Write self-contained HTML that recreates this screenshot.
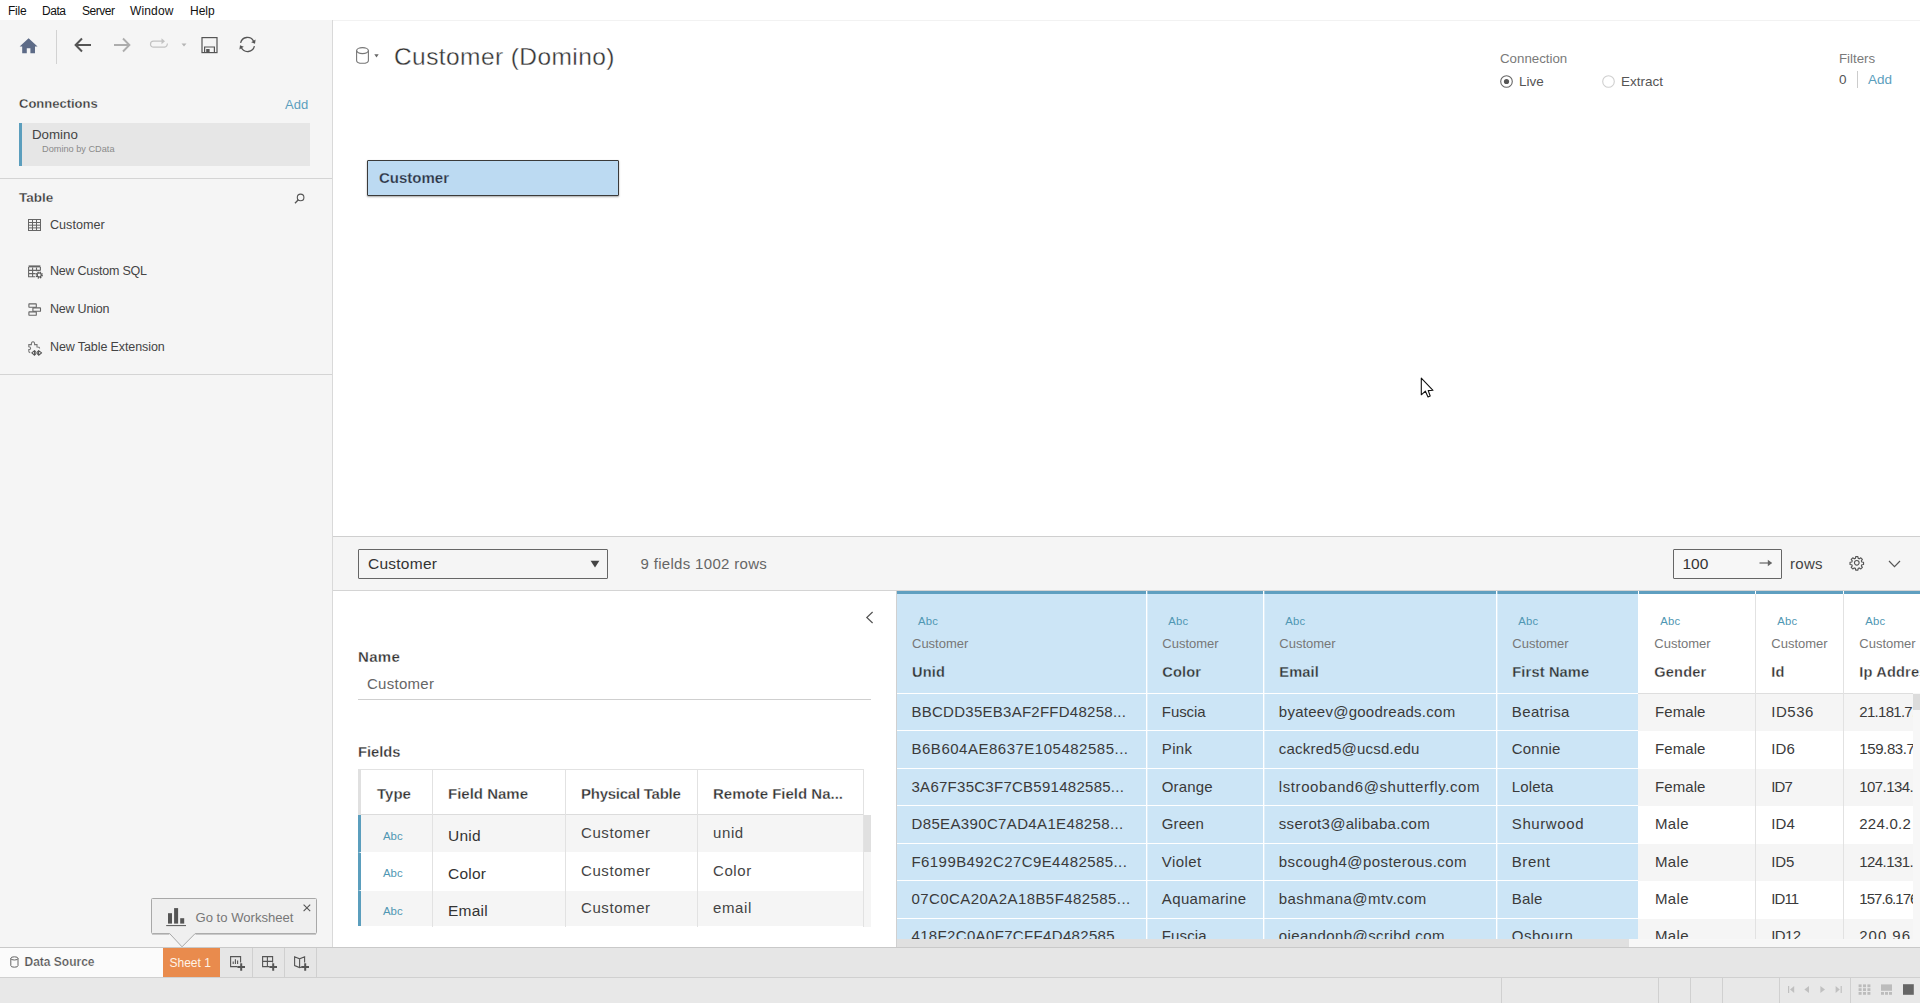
<!DOCTYPE html>
<html>
<head>
<meta charset="utf-8">
<title>Tableau - Customer (Domino)</title>
<style>
*{box-sizing:border-box;margin:0;padding:0}
html,body{width:1920px;height:1003px;overflow:hidden;background:#fff}
body{font-family:"Liberation Sans",sans-serif;color:#333;position:relative;font-size:13px}
.abs{position:absolute}
.t{position:absolute;white-space:nowrap;line-height:1}
svg{position:absolute;overflow:visible}
/* menu */
#menubar{left:0;top:0;width:1920px;height:20px;background:#fff}
#menubar .t{top:5px;font-size:12px;color:#111}
/* left panel */
#left{left:0;top:20px;width:333px;height:927px;background:#f5f5f5;border-right:1px solid #d9d9d9}
.hline{position:absolute;height:1px;background:#d4d4d4}
.vline{position:absolute;width:1px;background:#d4d4d4}
.b{font-weight:bold}
.link{color:#5b9ebd}
/* canvas */
#canvas{left:333px;top:20px;width:1587px;height:516px;background:#fff;border-top:1px solid #f2f2f2}
/* lower bar */
#lbar{left:333px;top:536px;width:1587px;height:55px;background:#f5f5f5;border-top:1px solid #cfcfcf;border-bottom:1px solid #d4d4d4}
/* meta */
#meta{left:333px;top:591px;width:564px;height:356px;background:#fff}
/* grid */
#grid{left:897px;top:591px;width:1023px;height:356px;background:#fff;overflow:hidden}
/* bottom */
#tabs{left:0;top:947px;width:1920px;height:31px;background:#e6e6e6;border-top:1px solid #c9c9c9}
#status{left:0;top:977px;width:1920px;height:26px;background:#e8e8e8;border-top:1px solid #d0d0d0}
.gc{font-size:15px;color:#3a3a3a}
.sb{-webkit-text-stroke:.28px #fff}
</style>
</head>
<body>
<!-- MENU BAR -->
<div id="menubar" class="abs">
  <span class="t" style="left:8px;letter-spacing:-.26px">File</span>
  <span class="t" style="left:42px;letter-spacing:-.44px">Data</span>
  <span class="t" style="left:82px;letter-spacing:-.49px">Server</span>
  <span class="t" style="left:130px;letter-spacing:.15px">Window</span>
  <span class="t" style="left:190px">Help</span>
</div>

<!-- LEFT PANEL -->
<div id="left" class="abs"></div>
<!--LEFT-START-->
<!-- toolbar -->
<svg style="left:18.6px;top:38px" width="19.2" height="16" viewBox="0 0 18 16" preserveAspectRatio="none"><path d="M9 0.3 L17.4 8.4 L15 8.4 L15 15.3 L10.7 15.3 L10.7 10.3 L7.3 10.3 L7.3 15.3 L3 15.3 L3 8.4 L0.6 8.4 Z" fill="#5d6b87"/></svg>
<div class="vline" style="left:56px;top:30px;height:34px;background:#d2d2d2"></div>
<svg style="left:74px;top:37px" width="18" height="16" viewBox="0 0 18 16"><path d="M8 1.5 L1.6 8 L8 14.5 M1.8 8 H17" fill="none" stroke="#555" stroke-width="2"/></svg>
<svg style="left:113px;top:37px" width="18" height="16" viewBox="0 0 18 16"><path d="M10 1.5 L16.4 8 L10 14.5 M16.2 8 H1" fill="none" stroke="#adadad" stroke-width="1.9"/></svg>
<svg style="left:149px;top:37px" width="20" height="12" viewBox="0 0 20 12"><path d="M13 4.2 H4.5 A3 3 0 0 0 4.5 10.2 H15.5 A3 3 0 0 0 18.2 6.5" fill="none" stroke="#c2c2c2" stroke-width="1.2"/><path d="M12.5 1.2 L16 4.2 L12.5 7.2 Z" fill="#c2c2c2"/></svg>
<svg style="left:181px;top:43px" width="6" height="4" viewBox="0 0 6 4"><path d="M0.5 0.5 H5.5 L3 3.5 Z" fill="#b5b5b5"/></svg>
<svg style="left:200.8px;top:37px" width="17" height="16" viewBox="0 0 17 16"><rect x="1" y="0.6" width="15" height="15" fill="none" stroke="#555" stroke-width="1.2"/><path d="M3.6 15.6 V10 H13.4 V15.6" fill="none" stroke="#555" stroke-width="1.2"/><rect x="5.2" y="12" width="3.4" height="3.6" fill="#555"/></svg>
<svg style="left:238px;top:36px" width="19" height="17" viewBox="0 0 19 17"><path d="M2.6 6.8 A7 7 0 0 1 15.6 5.2" fill="none" stroke="#555" stroke-width="1.3"/><path d="M16.4 10.2 A7 7 0 0 1 3.4 11.8" fill="none" stroke="#555" stroke-width="1.3"/><path d="M17.6 3.6 L17 7.8 L13.2 6.2 Z" fill="#555"/><path d="M1.4 13.4 L2 9.2 L5.8 10.8 Z" fill="#555"/></svg>

<!-- connections -->
<span class="t b" style="-webkit-text-stroke:.28px #f5f5f5;left:19px;top:97px;font-size:13px;color:#333">Connections</span>
<span class="t link" style="left:285px;top:98px;font-size:13px">Add</span>
<div class="abs" style="left:19px;top:123px;width:291px;height:43px;background:#e6e6e6;border-left:3px solid #5b9ebd"></div>
<span class="t" style="left:32px;top:128px;font-size:13.3px;color:#444">Domino</span>
<span class="t" style="left:42px;top:144.5px;font-size:9.2px;color:#8a8a8a">Domino by CData</span>
<div class="hline" style="left:0;top:178px;width:332px"></div>

<!-- table -->
<span class="t b" style="-webkit-text-stroke:.28px #f5f5f5;left:19px;top:191px;font-size:13.5px;color:#333">Table</span>
<svg style="left:294px;top:193px" width="11" height="11" viewBox="0 0 11 11"><circle cx="6.6" cy="4.4" r="3.3" fill="none" stroke="#555" stroke-width="1.1"/><path d="M4.3 6.8 L1 10.2" stroke="#555" stroke-width="1.3"/></svg>

<svg style="left:28px;top:219px" width="13" height="12" viewBox="0 0 13 12"><rect x="0.5" y="0.5" width="12" height="11" fill="none" stroke="#666" stroke-width="1"/><path d="M0.5 3.5 H12.5 M0.5 6.2 H12.5 M0.5 8.9 H12.5 M4.5 0.5 V11.5 M8.5 0.5 V11.5" stroke="#666" stroke-width="1" fill="none"/></svg>
<span class="t" style="left:50px;top:219px;font-size:12.6px;color:#444">Customer</span>

<svg style="left:28px;top:264.5px" width="15" height="14" viewBox="0 0 15 14"><path d="M0.6 0.4 H12.4 V2.4 H0.6 Z" fill="#666"/><path d="M0.6 2 V11.8 H7.4 M12.4 2 V5.6 M0.6 5.4 H12.4 M0.6 8.6 H8 M4.6 2.4 V11.8 M8.5 2.4 V6.2" stroke="#666" stroke-width="1.1" fill="none"/><circle cx="11.2" cy="10" r="3.9" fill="#f5f5f5"/><circle cx="11.2" cy="10" r="2.9" fill="none" stroke="#555" stroke-width="1.5" stroke-dasharray="1.3 1"/><circle cx="11.2" cy="10" r="2" fill="none" stroke="#555" stroke-width="1.1"/></svg>
<span class="t" style="left:50px;top:265px;font-size:12.5px;letter-spacing:-.23px;color:#444">New Custom SQL</span>

<svg style="left:28px;top:303px" width="14" height="14" viewBox="0 0 14 14"><rect x="0.9" y="0.9" width="7.4" height="3.4" rx="0.3" fill="none" stroke="#666" stroke-width="1.1"/><rect x="4.9" y="4.9" width="7.6" height="3.4" rx="0.3" fill="none" stroke="#666" stroke-width="1.1"/><rect x="0.9" y="8.9" width="7.4" height="3.4" rx="0.3" fill="none" stroke="#666" stroke-width="1.1"/></svg>
<span class="t" style="left:50px;top:303px;font-size:12.5px;letter-spacing:-.22px;color:#444">New Union</span>

<svg style="left:28px;top:340.5px" width="16" height="15" viewBox="0 0 16 15"><path d="M2.2 11.6 Q0.8 11.4 0.8 10.2 V8.6 Q2.6 8.6 2.6 7.2 Q2.6 5.8 0.8 5.8 V3.6 H3.4 Q3.2 0.8 5 0.8 Q6.8 0.8 6.6 3.6 H9 V6 Q11.6 5.8 11.6 7.6" fill="none" stroke="#777" stroke-width="1.1"/><path d="M6.6 9.6 L3.8 11.9 L6.6 14.2 Z M10.6 9.6 L13.6 11.9 L10.6 14.2 Z" fill="none" stroke="#555" stroke-width="1.1" stroke-linejoin="round"/><path d="M6.6 10.2 Q8 9.6 8 11.9 Q8 14.2 6.6 13.6 M10.6 10.2 Q9.2 9.6 9.2 11.9 Q9.2 14.2 10.6 13.6" fill="none" stroke="#555" stroke-width="1"/></svg>
<span class="t" style="left:50px;top:341px;font-size:12.5px;letter-spacing:-.1px;color:#444">New Table Extension</span>
<div class="hline" style="left:0;top:374px;width:332px"></div>
<!--LEFT-END-->

<!-- CANVAS -->
<div id="canvas" class="abs"></div>
<!--CANVAS-START-->
<!-- datasource icon + title -->
<svg style="left:355px;top:47px" width="15" height="17" viewBox="0 0 15 17"><path d="M1.6 3.6 V13.4 A5.9 2.9 0 0 0 13.4 13.4 V3.6" fill="none" stroke="#777" stroke-width="1.1"/><ellipse cx="7.5" cy="3.6" rx="5.9" ry="3" fill="none" stroke="#777" stroke-width="1.1"/></svg>
<svg style="left:374px;top:53.5px" width="5" height="4" viewBox="0 0 5 4"><path d="M0.3 0.3 H4.7 L2.5 3.4 Z" fill="#666"/></svg>
<span class="t" id="title" style="left:394px;top:44.7px;font-size:24.5px;letter-spacing:.42px;color:#333;-webkit-text-stroke:.35px #fff">Customer (Domino)</span>

<!-- connection -->
<span class="t" style="left:1500px;top:52px;font-size:13.3px;color:#7a7a7a">Connection</span>
<svg style="left:1500px;top:75px" width="13" height="13" viewBox="0 0 13 13"><circle cx="6.5" cy="6.5" r="5.8" fill="#fff" stroke="#666" stroke-width="1.1"/><circle cx="6.5" cy="6.5" r="2.6" fill="#555"/></svg>
<span class="t" style="left:1519px;top:75px;font-size:13.5px;color:#555">Live</span>
<svg style="left:1602px;top:75px" width="13" height="13" viewBox="0 0 13 13"><circle cx="6.5" cy="6.5" r="5.8" fill="#fff" stroke="#cfcfcf" stroke-width="1.1"/></svg>
<span class="t" style="left:1621px;top:75px;font-size:13.5px;color:#555">Extract</span>

<span class="t" style="left:1839px;top:52px;font-size:13.3px;color:#7a7a7a">Filters</span>
<span class="t" style="left:1839px;top:73px;font-size:13.5px;color:#555">0</span>
<div class="vline" style="left:1857px;top:71px;height:17px;background:#ccc"></div>
<span class="t link" style="left:1868px;top:73px;font-size:13.5px">Add</span>

<!-- table box -->
<div class="abs" style="left:367px;top:160px;width:252px;height:36px;background:#bcdaf2;border:1px solid #3a3a3a;border-radius:1px;box-shadow:0 1px 2px rgba(0,0,0,.35)"></div>
<span class="t b" style="-webkit-text-stroke:.25px #bcdaf2;left:379px;top:170px;font-size:15px;color:#2d3340">Customer</span>

<!-- cursor -->
<svg style="left:1415px;top:372px" width="24" height="30" viewBox="1415 372 24 30"><path d="M1421.3 378.2 L1421.3 394.8 L1425.4 391.2 L1428 396.9 L1430.2 396 L1428.2 390.6 L1433 390.3 Z" fill="#fff" stroke="#111" stroke-width="1.1" stroke-linejoin="round"/></svg>
<!--CANVAS-END-->

<!-- LOWER BAR -->
<div id="lbar" class="abs"></div>
<!--LBAR-START-->
<div class="abs" style="left:358px;top:549px;width:250px;height:30px;border:1px solid #666;border-radius:1px;background:#f5f5f5"></div>
<span class="t" style="left:368px;top:555.5px;font-size:15.5px;letter-spacing:.25px;color:#333">Customer</span>
<svg style="left:590px;top:560px" width="10" height="8" viewBox="0 0 10 8"><path d="M0.6 0.8 H9.4 L5 7.4 Z" fill="#444"/></svg>
<span class="t" style="left:640.5px;top:556px;font-size:15px;letter-spacing:.32px;color:#666">9 fields 1002 rows</span>

<div class="abs" style="left:1673px;top:549px;width:109px;height:30px;border:1px solid #666;border-radius:1px;background:#f7f7f7"></div>
<span class="t" style="left:1682.5px;top:555.5px;font-size:15.5px;color:#333">100</span>
<svg style="left:1759px;top:558px" width="14" height="10" viewBox="0 0 14 10"><path d="M0.5 5 H12.2" stroke="#666" stroke-width="1.2" fill="none"/><path d="M8.8 1.8 L13.2 5 L8.8 8.2 Z" fill="#666"/></svg>
<span class="t" style="left:1790px;top:556px;font-size:15px;letter-spacing:.3px;color:#444">rows</span>
<svg style="left:1848.7px;top:555.2px" width="15.6" height="15.6" viewBox="0 0 24 24"><path d="M12 8.4a3.6 3.6 0 1 0 0 7.2a3.6 3.6 0 0 0 0-7.2z M10.3 2.5h3.4l.5 2.7 1.7.7 2.3-1.6 2.4 2.4-1.6 2.3.7 1.7 2.7.5v3.4l-2.7.5-.7 1.7 1.6 2.3-2.4 2.4-2.3-1.6-1.7.7-.5 2.7h-3.4l-.5-2.7-1.7-.7-2.3 1.6-2.4-2.4 1.6-2.3-.7-1.7-2.7-.5v-3.4l2.7-.5.7-1.7-1.6-2.3 2.4-2.4 2.3 1.6 1.7-.7z" fill="none" stroke="#555" stroke-width="1.75" stroke-linejoin="round"/></svg>
<svg style="left:1888px;top:559.5px" width="13" height="8" viewBox="0 0 13 8"><path d="M1 1 L6.5 6.6 L12 1" fill="none" stroke="#555" stroke-width="1.2"/></svg>
<!--LBAR-END-->

<!-- METADATA -->
<div id="meta" class="abs"></div>
<!--META-START-->
<div class="vline" style="left:896px;top:591px;height:356px;background:#d0d0d0"></div>
<svg style="left:865px;top:611px" width="9" height="13" viewBox="0 0 9 13"><path d="M7.6 1 L1.8 6.5 L7.6 12" fill="none" stroke="#555" stroke-width="1.2"/></svg>
<span class="t b sb" style="left:358px;top:649px;font-size:15px;letter-spacing:.3px;color:#333">Name</span>
<span class="t" style="left:367px;top:676px;font-size:15px;letter-spacing:.28px;color:#666">Customer</span>
<div class="hline" style="left:358px;top:699px;width:513px;background:#cfcfcf"></div>
<span class="t b sb" style="left:358px;top:745px;font-size:14.7px;color:#333">Fields</span>

<!-- fields table -->
<div class="abs" style="left:358px;top:769px;width:506px;height:46px;background:#fff;border-top:1px solid #e2e2e2;border-bottom:1px solid #dcdcdc;border-right:1px solid #e2e2e2;border-left:3px solid #e0e0e0"></div>
<div class="abs" style="left:358px;top:815px;width:506px;height:38px;background:#f5f5f5;border-left:3px solid #5b9ebd;border-bottom:1px solid #fff"></div>
<div class="abs" style="left:358px;top:853px;width:506px;height:37px;background:#fff;border-left:3px solid #5b9ebd"></div>
<div class="abs" style="left:358px;top:890px;width:506px;height:36px;background:#f5f5f5;border-left:3px solid #5b9ebd;border-top:1px solid #fff"></div>
<div class="vline" style="left:432px;top:770px;height:157px;background:#e2e2e2"></div>
<div class="vline" style="left:565px;top:770px;height:157px;background:#e2e2e2"></div>
<div class="vline" style="left:697px;top:770px;height:157px;background:#e2e2e2"></div>
<div class="vline" style="left:863px;top:770px;height:157px;background:#e2e2e2"></div>
<div class="abs" style="left:864px;top:815px;width:7px;height:112px;background:#f5f5f5"></div>
<div class="abs" style="left:864px;top:815px;width:7px;height:37px;background:#e0e0e0"></div>

<span class="t b sb" style="left:377px;top:786px;font-size:15px;color:#333">Type</span>
<span class="t b sb" style="left:448px;top:786px;font-size:15px;color:#333">Field Name</span>
<span class="t b sb" style="left:581px;top:786px;font-size:15px;letter-spacing:-.25px;color:#333">Physical Table</span>
<span class="t b sb" style="left:713px;top:786px;font-size:15px;color:#333">Remote Field Na...</span>

<span class="t" style="color:#4f97b3;left:383px;top:831px;font-size:11.4px">Abc</span>
<span class="t" style="left:448px;top:828px;font-size:15.5px;letter-spacing:.22px;color:#333">Unid</span>
<span class="t" style="left:581px;top:825px;font-size:15px;letter-spacing:.58px;color:#444">Customer</span>
<span class="t" style="left:713px;top:825px;font-size:15px;letter-spacing:.6px;color:#444">unid</span>

<span class="t" style="color:#4f97b3;left:383px;top:868px;font-size:11.4px">Abc</span>
<span class="t" style="left:448px;top:866px;font-size:15.5px;letter-spacing:.22px;color:#333">Color</span>
<span class="t" style="left:581px;top:863px;font-size:15px;letter-spacing:.58px;color:#444">Customer</span>
<span class="t" style="left:713px;top:863px;font-size:15px;letter-spacing:.6px;color:#444">Color</span>

<span class="t" style="color:#4f97b3;left:383px;top:906px;font-size:11.4px">Abc</span>
<span class="t" style="left:448px;top:903px;font-size:15.5px;letter-spacing:.22px;color:#333">Email</span>
<span class="t" style="left:581px;top:900px;font-size:15px;letter-spacing:.58px;color:#444">Customer</span>
<span class="t" style="left:713px;top:900px;font-size:15px;letter-spacing:.6px;color:#444">email</span>
<!--META-END-->

<!-- GRID -->
<div id="grid" class="abs">
<!--GRID-START-->
<div class="abs" style="left:0;top:0;width:1023px;height:3px;background:#5f9fc0"></div>
<div class="abs" style="left:0;top:3px;width:741px;height:347px;background:#cce5f6"></div>
<div class="abs" style="left:741px;top:103px;width:282px;height:37px;background:#f5f5f5"></div>
<div class="abs" style="left:741px;top:140px;width:282px;height:38px;background:#fff"></div>
<div class="abs" style="left:741px;top:178px;width:282px;height:37px;background:#f5f5f5"></div>
<div class="abs" style="left:741px;top:215px;width:282px;height:38px;background:#fff"></div>
<div class="abs" style="left:741px;top:253px;width:282px;height:37px;background:#f5f5f5"></div>
<div class="abs" style="left:741px;top:290px;width:282px;height:38px;background:#fff"></div>
<div class="abs" style="left:741px;top:328px;width:282px;height:37px;background:#f5f5f5"></div>
<div class="abs" style="left:0;top:102px;width:741px;height:1px;background:#fff"></div>
<div class="abs" style="left:0;top:139px;width:741px;height:1px;background:#fff"></div>
<div class="abs" style="left:0;top:177px;width:741px;height:1px;background:#fff"></div>
<div class="abs" style="left:0;top:214px;width:741px;height:1px;background:#fff"></div>
<div class="abs" style="left:0;top:252px;width:741px;height:1px;background:#fff"></div>
<div class="abs" style="left:0;top:289px;width:741px;height:1px;background:#fff"></div>
<div class="abs" style="left:0;top:327px;width:741px;height:1px;background:#fff"></div>
<div class="abs" style="left:0;top:364px;width:741px;height:1px;background:#fff"></div>
<div class="abs" style="left:741px;top:102px;width:282px;height:1px;background:#dedede"></div>
<div class="abs" style="left:249px;top:0;width:1px;height:350px;background:#fff"></div>
<div class="abs" style="left:250px;top:0;width:1px;height:350px;background:rgba(255,255,255,.35)"></div>
<div class="abs" style="left:366px;top:0;width:1px;height:350px;background:#fff"></div>
<div class="abs" style="left:367px;top:0;width:1px;height:350px;background:rgba(255,255,255,.35)"></div>
<div class="abs" style="left:599px;top:0;width:1px;height:350px;background:#fff"></div>
<div class="abs" style="left:600px;top:0;width:1px;height:350px;background:rgba(255,255,255,.35)"></div>
<div class="abs" style="left:741px;top:0;width:1px;height:3px;background:#fff"></div>
<div class="abs" style="left:858px;top:0;width:1px;height:350px;background:#e2e2e2"></div>
<div class="abs" style="left:858px;top:0;width:1px;height:3px;background:#fff"></div>
<div class="abs" style="left:946px;top:0;width:1px;height:350px;background:#e2e2e2"></div>
<div class="abs" style="left:946px;top:0;width:1px;height:3px;background:#fff"></div>
<span class="t" style="color:#4f97b3;left:21px;top:25px;font-size:11.3px;letter-spacing:.2px">Abc</span>
<span class="t" style="left:15px;top:45.5px;font-size:13px;color:#777">Customer</span>
<span class="t b gh" style="-webkit-text-stroke:.28px #cce5f6;left:15px;top:73.5px;font-size:14.6px;letter-spacing:.15px;color:#333">Unid</span>
<span class="t" style="color:#4f97b3;left:271.3px;top:25px;font-size:11.3px;letter-spacing:.2px">Abc</span>
<span class="t" style="left:265.3px;top:45.5px;font-size:13px;color:#777">Customer</span>
<span class="t b gh" style="-webkit-text-stroke:.28px #cce5f6;left:265.3px;top:73.5px;font-size:14.6px;letter-spacing:.15px;color:#333">Color</span>
<span class="t" style="color:#4f97b3;left:388.3px;top:25px;font-size:11.3px;letter-spacing:.2px">Abc</span>
<span class="t" style="left:382.3px;top:45.5px;font-size:13px;color:#777">Customer</span>
<span class="t b gh" style="-webkit-text-stroke:.28px #cce5f6;left:382.3px;top:73.5px;font-size:14.6px;letter-spacing:.15px;color:#333">Email</span>
<span class="t" style="color:#4f97b3;left:621.3px;top:25px;font-size:11.3px;letter-spacing:.2px">Abc</span>
<span class="t" style="left:615.3px;top:45.5px;font-size:13px;color:#777">Customer</span>
<span class="t b gh" style="-webkit-text-stroke:.28px #cce5f6;left:615.3px;top:73.5px;font-size:14.6px;letter-spacing:.15px;color:#333">First Name</span>
<span class="t" style="color:#4f97b3;left:763.3px;top:25px;font-size:11.3px;letter-spacing:.2px">Abc</span>
<span class="t" style="left:757.3px;top:45.5px;font-size:13px;color:#777">Customer</span>
<span class="t b gh" style="-webkit-text-stroke:.28px #fff;left:757.3px;top:73.5px;font-size:14.6px;letter-spacing:.15px;color:#333">Gender</span>
<span class="t" style="color:#4f97b3;left:880.3px;top:25px;font-size:11.3px;letter-spacing:.2px">Abc</span>
<span class="t" style="left:874.3px;top:45.5px;font-size:13px;color:#777">Customer</span>
<span class="t b gh" style="-webkit-text-stroke:.28px #fff;left:874.3px;top:73.5px;font-size:14.6px;letter-spacing:.15px;color:#333">Id</span>
<span class="t" style="color:#4f97b3;left:968.3px;top:25px;font-size:11.3px;letter-spacing:.2px">Abc</span>
<span class="t" style="left:962.3px;top:45.5px;font-size:13px;color:#777">Customer</span>
<span class="t b gh" style="-webkit-text-stroke:.28px #fff;left:962.3px;top:73.5px;font-size:14.6px;letter-spacing:.15px;color:#333">Ip Address</span>
<span class="t gc" style="left:14.5px;top:113.1px;letter-spacing:0.260px">BBCDD35EB3AF2FFD48258...</span>
<span class="t gc" style="left:264.8px;top:113.1px;letter-spacing:-0.080px">Fuscia</span>
<span class="t gc" style="left:381.8px;top:113.1px;letter-spacing:0.260px">byateev@goodreads.com</span>
<span class="t gc" style="left:614.8px;top:113.1px;letter-spacing:0.374px">Beatrisa</span>
<span class="t gc" style="left:758.0px;top:113.1px;letter-spacing:0.080px">Female</span>
<span class="t gc" style="left:874.3px;top:113.1px;letter-spacing:0.500px">ID536</span>
<span class="t gc" style="left:962.3px;top:113.1px;letter-spacing:-0.716px">21.181.7.22</span>
<span class="t gc" style="left:14.5px;top:149.9px;letter-spacing:0.508px">B6B604AE8637E105482585...</span>
<span class="t gc" style="left:264.8px;top:149.9px;letter-spacing:0.332px">Pink</span>
<span class="t gc" style="left:381.8px;top:149.9px;letter-spacing:0.225px">cackred5@ucsd.edu</span>
<span class="t gc" style="left:614.8px;top:149.9px;letter-spacing:0.200px">Connie</span>
<span class="t gc" style="left:758.0px;top:149.9px;letter-spacing:0.080px">Female</span>
<span class="t gc" style="left:874.3px;top:149.9px;letter-spacing:0.100px">ID6</span>
<span class="t gc" style="left:962.3px;top:149.9px;letter-spacing:-0.401px">159.83.71.13</span>
<span class="t gc" style="left:14.5px;top:187.6px;letter-spacing:0.267px">3A67F35C3F7CB591482585...</span>
<span class="t gc" style="left:264.8px;top:187.6px;letter-spacing:0.160px">Orange</span>
<span class="t gc" style="left:381.8px;top:187.6px;letter-spacing:0.592px">lstrooband6@shutterfly.com</span>
<span class="t gc" style="left:614.8px;top:187.6px;letter-spacing:0.120px">Loleta</span>
<span class="t gc" style="left:758.0px;top:187.6px;letter-spacing:0.080px">Female</span>
<span class="t gc" style="left:874.3px;top:187.6px;letter-spacing:-0.900px">ID7</span>
<span class="t gc" style="left:962.3px;top:187.6px;letter-spacing:-0.573px">107.134.22.1</span>
<span class="t gc" style="left:14.5px;top:224.9px;letter-spacing:0.357px">D85EA390C7AD4A1E48258...</span>
<span class="t gc" style="left:264.8px;top:224.9px;letter-spacing:0.100px">Green</span>
<span class="t gc" style="left:381.8px;top:224.9px;letter-spacing:0.311px">sserot3@alibaba.com</span>
<span class="t gc" style="left:614.8px;top:224.9px;letter-spacing:0.598px">Shurwood</span>
<span class="t gc" style="left:758.0px;top:224.9px;letter-spacing:0.334px">Male</span>
<span class="t gc" style="left:874.3px;top:224.9px;letter-spacing:0.100px">ID4</span>
<span class="t gc" style="left:962.3px;top:224.9px;letter-spacing:0.231px">224.0.2</span>
<span class="t gc" style="left:14.5px;top:262.6px;letter-spacing:0.424px">F6199B492C27C9E4482585...</span>
<span class="t gc" style="left:264.8px;top:262.6px;letter-spacing:0.440px">Violet</span>
<span class="t gc" style="left:381.8px;top:262.6px;letter-spacing:0.430px">bscough4@posterous.com</span>
<span class="t gc" style="left:614.8px;top:262.6px;letter-spacing:0.550px">Brent</span>
<span class="t gc" style="left:758.0px;top:262.6px;letter-spacing:0.334px">Male</span>
<span class="t gc" style="left:874.3px;top:262.6px;letter-spacing:-0.200px">ID5</span>
<span class="t gc" style="left:962.3px;top:262.6px;letter-spacing:-0.569px">124.131.55.2</span>
<span class="t gc" style="left:14.5px;top:299.9px;letter-spacing:0.424px">07C0CA20A2A18B5F482585...</span>
<span class="t gc" style="left:264.8px;top:299.9px;letter-spacing:0.376px">Aquamarine</span>
<span class="t gc" style="left:381.8px;top:299.9px;letter-spacing:0.441px">bashmana@mtv.com</span>
<span class="t gc" style="left:614.8px;top:299.9px;letter-spacing:0.200px">Bale</span>
<span class="t gc" style="left:758.0px;top:299.9px;letter-spacing:0.334px">Male</span>
<span class="t gc" style="left:874.3px;top:299.9px;letter-spacing:-0.934px">ID11</span>
<span class="t gc" style="left:962.3px;top:299.9px;letter-spacing:-0.950px">157.6.176.10</span>
<span class="t gc" style="left:14.5px;top:337.4px;letter-spacing:0.343px">418F2C0A0F7CFF4D482585...</span>
<span class="t gc" style="left:264.8px;top:337.4px;letter-spacing:0.120px">Fuscia</span>
<span class="t gc" style="left:381.8px;top:337.4px;letter-spacing:0.410px">ojeandonb@scribd.com</span>
<span class="t gc" style="left:614.8px;top:337.4px;letter-spacing:0.565px">Osbourn</span>
<span class="t gc" style="left:758.0px;top:337.4px;letter-spacing:0.334px">Male</span>
<span class="t gc" style="left:874.3px;top:337.4px;letter-spacing:-0.601px">ID12</span>
<span class="t gc" style="left:962.3px;top:337.4px;letter-spacing:0.960px">200.96.11.24</span>
<div class="abs" style="left:0;top:348px;width:1023px;height:8px;background:#f7f7f7"></div>
<div class="abs" style="left:0;top:348px;width:732px;height:8px;background:#e0e0e0"></div>
<div class="abs" style="left:1016px;top:102px;width:7px;height:247px;background:#f7f7f7"></div>
<div class="abs" style="left:1016px;top:103px;width:7px;height:16px;background:#dcdcdc"></div>
<!--GRID-END-->
</div>

<!-- BOTTOM -->
<div id="tabs" class="abs"></div>
<div id="status" class="abs"></div>
<!--BOTTOM-START-->
<!-- tabs -->
<div class="abs" style="left:0;top:948px;width:163px;height:29px;background:#fbfbfb"></div>
<svg style="left:10px;top:956px" width="9" height="12" viewBox="0 0 9 12"><path d="M0.8 2.4 V9.6 A3.6 1.6 0 0 0 8 9.6 V2.4" fill="none" stroke="#666" stroke-width="1"/><ellipse cx="4.4" cy="2.4" rx="3.6" ry="1.6" fill="none" stroke="#666" stroke-width="1"/></svg>
<span class="t b" style="-webkit-text-stroke:.22px #fbfbfb;left:24.5px;top:955.5px;font-size:12px;color:#555">Data Source</span>
<div class="abs" style="left:163px;top:948px;width:57px;height:29px;background:#e98b4d"></div>
<span class="t" style="left:169.5px;top:956.5px;font-size:12px;color:#fff3e6">Sheet 1</span>
<div class="vline" style="left:252px;top:948px;height:29px;background:#d0d0d0"></div>
<div class="vline" style="left:284px;top:948px;height:29px;background:#d0d0d0"></div>
<div class="vline" style="left:316px;top:948px;height:29px;background:#d0d0d0"></div>
<!-- new worksheet -->
<svg style="left:230px;top:956px" width="16" height="16" viewBox="0 0 16 16"><path d="M7.5 10.6 H0.6 V0.6 H10.6 V6.5" fill="none" stroke="#555" stroke-width="1.1"/><path d="M3.2 8 V5.4 M5.4 8 V3.2 M7.6 8 V4.4" stroke="#555" stroke-width="1.1"/><path d="M11.2 7.2 V14.8 M7.4 11 H15" stroke="#555" stroke-width="2"/></svg>
<!-- new dashboard -->
<svg style="left:262px;top:956px" width="16" height="16" viewBox="0 0 16 16"><path d="M7.5 10.6 H0.6 V0.6 H10.6 V6.5 M0.6 5.4 H10.6 M5.4 0.6 V10.6" fill="none" stroke="#555" stroke-width="1.1"/><path d="M11.2 7.2 V14.8 M7.4 11 H15" stroke="#555" stroke-width="2"/></svg>
<!-- new story -->
<svg style="left:294px;top:956px" width="16" height="16" viewBox="0 0 16 16"><path d="M8 11 L5.6 11.6 L0.6 9.6 V0.8 L5.6 2.8 L10.6 0.8 V6.5 M5.6 2.8 V11.6" fill="none" stroke="#555" stroke-width="1.1"/><path d="M11.2 7.2 V14.8 M7.4 11 H15" stroke="#555" stroke-width="2"/></svg>

<!-- tooltip -->
<svg style="left:148px;top:895px" width="174" height="56" viewBox="148 895 174 56"><path d="M152.5 898.5 H315.5 A1 1 0 0 1 316.5 899.5 V932.5 A1 1 0 0 1 315.5 933.5 H195.2 L182 946.8 L169.6 933.5 H152.5 A1 1 0 0 1 151.5 932.5 V899.5 A1 1 0 0 1 152.5 898.5 Z" fill="#efefef" stroke="#a8a8a8" stroke-width="1"/><path d="M152 934.2 H169.3 M195.5 934.2 H316" stroke="#b5b5b5" stroke-width="1" fill="none"/></svg>
<svg style="left:166px;top:908px" width="20" height="18" viewBox="166 908 20 18"><rect x="168" y="913.2" width="4" height="10.4" fill="#555"/><rect x="174.1" y="908.1" width="4" height="15.5" fill="#555"/><rect x="180.2" y="918.2" width="4" height="5.4" fill="#555"/><rect x="166.2" y="925.1" width="19.8" height="1" fill="#555"/></svg>
<span class="t" style="left:195.5px;top:911.4px;font-size:13.1px;color:#777">Go to Worksheet</span>
<svg style="left:303px;top:904px" width="8" height="8" viewBox="0 0 8 8"><path d="M0.6 0.6 L7.2 7.2 M7.2 0.6 L0.6 7.2" stroke="#555" stroke-width="1.1"/></svg>

<!-- status bar -->
<div class="vline" style="left:1501px;top:978px;height:25px;background:#d0d0d0"></div>
<div class="vline" style="left:1658px;top:978px;height:25px;background:#d0d0d0"></div>
<div class="vline" style="left:1690px;top:978px;height:25px;background:#d0d0d0"></div>
<div class="vline" style="left:1722px;top:978px;height:25px;background:#d0d0d0"></div>
<div class="vline" style="left:1779px;top:978px;height:25px;background:#d0d0d0"></div>
<div class="vline" style="left:1850px;top:978px;height:25px;background:#d0d0d0"></div>
<svg style="left:1787px;top:985px" width="58" height="9" viewBox="1787 985 58 9"><g fill="#c0c0c0"><rect x="1788" y="986" width="1.2" height="7"/><path d="M1794.2 986 L1794.2 993 L1790 989.5 Z"/><path d="M1809 986 L1809 993 L1804.4 989.5 Z"/><path d="M1820.4 986 L1820.4 993 L1825 989.5 Z"/><path d="M1835.6 986 L1835.6 993 L1839.8 989.5 Z"/><rect x="1840.6" y="986" width="1.2" height="7"/></g></svg>
<svg style="left:1858px;top:984px" width="58" height="12" viewBox="1858 984 58 12"><g fill="#bcbcbc"><rect x="1858.6" y="984.4" width="3" height="2.8"/><rect x="1863" y="984.4" width="3" height="2.8"/><rect x="1867.4" y="984.4" width="3" height="2.8"/><rect x="1858.6" y="988.2" width="3" height="2.8"/><rect x="1863" y="988.2" width="3" height="2.8"/><rect x="1867.4" y="988.2" width="3" height="2.8"/><rect x="1858.6" y="992" width="3" height="2.8"/><rect x="1863" y="992" width="3" height="2.8"/><rect x="1867.4" y="992" width="3" height="2.8"/><rect x="1881" y="984.4" width="11" height="6.4"/><rect x="1881" y="992" width="3" height="2.8"/><rect x="1885" y="992" width="3" height="2.8"/><rect x="1889" y="992" width="3" height="2.8"/></g><rect x="1903" y="984.2" width="10.8" height="10.6" fill="#666"/></svg>
<!--BOTTOM-END-->
</body>
</html>
